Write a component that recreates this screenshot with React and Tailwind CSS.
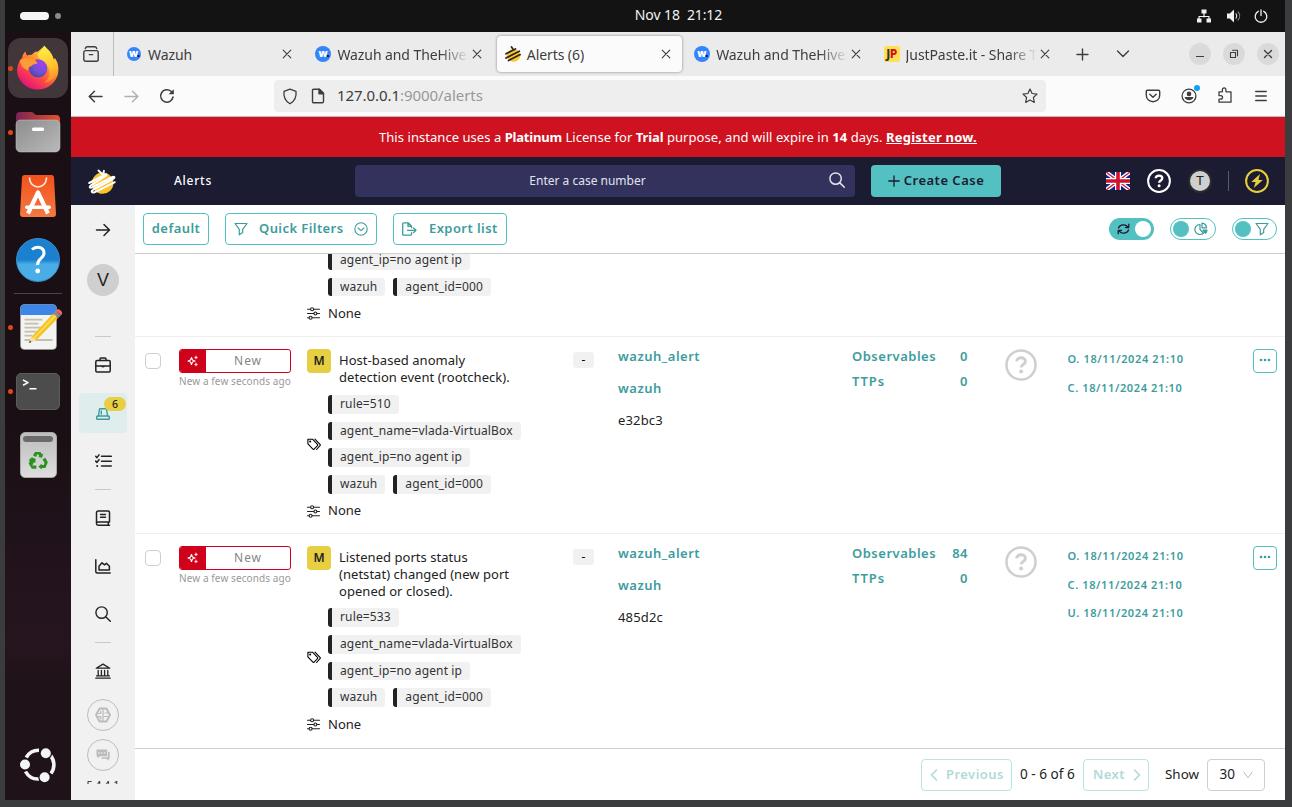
import React from "react";

/* ---------- small drawing helpers ---------- */

function Icon({ w = 16, h = w, vb, sw = 1.3, children, className = "" }) {
  return (
    <svg
      width={w}
      height={h}
      viewBox={vb || `0 0 ${w} ${h}`}
      fill="none"
      stroke="currentColor"
      strokeWidth={sw}
      strokeLinecap="round"
      strokeLinejoin="round"
      className={"shrink-0 " + className}
    >
      {children}
    </svg>
  );
}

const CloseX = ({ className = "" }) => (
  <Icon w={10} sw={1.1} className={className}>
    <path d="M1.2 1.2l7.6 7.6M8.8 1.2L1.2 8.8" />
  </Icon>
);

const WazuhFavicon = ({ small }) => (
  <span
    className={
      "flex shrink-0 items-center justify-center rounded-full bg-[#3585f9] font-['Open_Sans'] text-[10px] leading-none font-extrabold text-white " +
      (small ? "mr-px ml-px size-3.5" : "size-4")
    }
  >
    <span className="-mt-0.5 ml-px">w</span>
    <span className="-mt-0.5 -ml-px text-black">.</span>
  </span>
);

const HiveFavicon = () => (
  <Icon w={16} sw={1.7}>
    <ellipse cx="8.600" cy="9.400" rx="6.800" ry="6.300" fill="#fdc72f" stroke="none" />
    <path d="M6.500 1l1.300 1.800M1 7.800L10.500 3M1 12L14.300 5.200M3.500 14.600L15.200 8.600" stroke="#2b2420" />
  </Icon>
);

const HiveLogo = () => (
  <svg width="30" height="27" viewBox="0 0 30 27" fill="none" strokeLinecap="round" strokeLinejoin="round">
    <ellipse cx="15.600" cy="15.200" rx="10.800" ry="10.600" fill="#fbc22d" />
    <path
      d="M2.200 15L15.500 7.800C18.500 6 21 6.300 18.500 8L4 17.300C1.500 19.500 3 20.600 6 18.800L24 9.600C27.500 8 28.500 9.300 26 11L6.500 21.500C3 23.800 5 25.600 9.500 23.300L27.800 14.200"
      stroke="#fff"
      strokeWidth="2"
    />
    <path d="M11.500 2.500l4 4M17 2.800l-1 3.400" stroke="#fff" strokeWidth="1.900" />
  </svg>
);

const Question = ({ size, sw }) => (
  <Icon w={size} vb="0 0 24 24" sw={sw}>
    <circle cx="12" cy="12" r="10.900" />
    <path d="M8.700 9.300c.2-3.700 6.600-3.700 6.600 0 0 2.200-3.100 2.200-3.200 4.500" strokeWidth={sw * 1.15} strokeLinecap="butt" />
    <circle cx="12.100" cy="16.800" r="1.500" fill="currentColor" stroke="none" />
  </Icon>
);

const Funnel = ({ w = 14 }) => (
  <Icon w={w} vb="0 0 14 14" sw={1.2}>
    <path d="M1 1.500h12L8.700 7.300v3.200L5.300 12.800V7.300z" />
  </Icon>
);

const SearchIcon = ({ sw = 1.5 }) => (
  <Icon w={16} sw={sw}>
    <circle cx="6.600" cy="6.600" r="5.700" />
    <path d="M10.900 10.900L15.300 15.300" />
  </Icon>
);

/* ---------- desktop ---------- */

function TopBar() {
  return (
    <div className="flex h-8 items-center bg-[#131313] text-[#f2f2f2]">
      <div className="flex flex-1 items-center gap-1.5 pl-[15px]">
        <span className="h-2 w-[29px] rounded-full bg-[#f4f4f4]" />
        <span className="size-1.5 rounded-full bg-[#8a8a8a]" />
      </div>
      <div className="pb-[3px] pl-[69px] text-[14px] tracking-[-0.1px] whitespace-pre">Nov 18  21:12</div>
      <div className="flex flex-1 items-center justify-end gap-3 pr-[17px]">
        <Icon w={16} sw={1.2} className="mr-0.5">
          <path d="M8 5v4M3 11V8.500h10V11" />
          <path d="M5.500 1.500h5v4h-5zM1 10.500h4.500v4H1zM10.500 10.500H15v4h-4.500z" fill="currentColor" stroke="none" />
        </Icon>
        <Icon w={16} sw={1.1}>
          <path d="M1 5.500h2.800L8 1.500v13l-4.200-4H1z" fill="currentColor" stroke="none" />
          <path d="M10 5.800c1 1.400 1 3 0 4.400" />
          <path d="M12 3.800c2.200 2.400 2.200 6 0 8.400" stroke="#8a8a8a" />
        </Icon>
        <Icon w={14} sw={1.3}>
          <path d="M4.300 2.300a5.800 5.800 0 1 0 5.400 0M7 .8v5.800" />
        </Icon>
      </div>
    </div>
  );
}

const Firefox = () => (
  <svg width="44" height="46" viewBox="0 0 44 46" className="-mt-0.5 -ml-px">
    <defs>
      <linearGradient id="ffBody" x1=".85" y1=".1" x2=".25" y2=".95">
        <stop offset="0" stopColor="#ffe14a" />
        <stop offset=".35" stopColor="#ff9a2c" />
        <stop offset=".65" stopColor="#ff4a45" />
        <stop offset="1" stopColor="#e6127c" />
      </linearGradient>
      <radialGradient id="ffGlobe" cx=".7" cy=".25" r=".8">
        <stop offset="0" stopColor="#a33df2" />
        <stop offset=".55" stopColor="#7550d8" />
        <stop offset="1" stopColor="#4b48a8" />
      </radialGradient>
      <linearGradient id="ffTail" x1=".4" y1="0" x2=".6" y2="1">
        <stop offset="0" stopColor="#fff04a" />
        <stop offset=".6" stopColor="#ffc22e" />
        <stop offset="1" stopColor="#ff8a2a" />
      </linearGradient>
    </defs>
    <path
      d="M6 14c.4-3 2-5.500 3.500-6.500.2 2 .8 3.200 1.700 4 1.800-.8 3-.9 4.500-.7 2-2 3.300-3 4.800-3.300C20 10 26 3 29 2.500c.4 5 8 7 9 14 .6-.4.9-1.500.9-2.400C42.500 19 43 25 42 30a21 21 0 0 1-40.600 0C.6 24 2 18 6 14z"
      fill="url(#ffBody)"
    />
    <path
      d="M21.500 10c2-1.500 5.500-5.500 6.500-8.500 5 5 9 8 9.700 15 .5-.5.8-1.500.8-2.500 4 6.500 3.500 15-1 20-3 3.300-6 4.500-9 4.500 6-5 6.500-11 3-16.500C29.500 17.500 22 17 21.500 10z"
      fill="url(#ffTail)"
    />
    <circle cx="22" cy="24.500" r="9.300" fill="url(#ffGlobe)" />
    <path
      d="M4 16c4-2.500 7-2.500 10-1.500 2.500.9 4.500.8 6 2.500l1.500 2.500c-2.500.6-5 .6-6 2.500-1.800.4-3.500 1.500-3 4.500-4-1-8.500-4.500-8.500-10.500z"
      fill="#ff9a35"
    />
    <path d="M12.700 24c0 6 4 10 9.300 10s9-3.500 9.600-7" fill="none" stroke="#ff5a3a" strokeWidth=".8" opacity=".7" />
  </svg>
);

const Files = () => (
  <svg width="46" height="42" viewBox="0 0 46 42">
    <defs>
      <linearGradient id="fTab" x1="0" x2="1">
        <stop offset="0" stopColor="#7a2454" />
        <stop offset="1" stopColor="#e5512a" />
      </linearGradient>
      <linearGradient id="fBody" x1="0" y1="0" x2="1" y2="1">
        <stop offset="0" stopColor="#8d8d8d" />
        <stop offset="1" stopColor="#b9b9b9" />
      </linearGradient>
    </defs>
    <path d="M1 5a4 4 0 0 1 4-4h11.500c2 0 3 3 5 3H41a4 4 0 0 1 4 4v20H1z" fill="url(#fTab)" />
    <rect x="1" y="9" width="44" height="32" rx="4.500" fill="url(#fBody)" stroke="#c9c9c9" strokeWidth=".5" />
    <rect x="17" y="16.500" width="12" height="3.500" rx="1.500" fill="#fff" />
  </svg>
);

const Store = () => (
  <svg width="36" height="44" viewBox="0 0 36 44">
    <defs>
      <linearGradient id="sBag" x1="0" y1="0" x2="0" y2="1">
        <stop offset="0" stopColor="#f4511c" />
        <stop offset="1" stopColor="#f37a42" />
      </linearGradient>
    </defs>
    <path d="M2 3.500C2 2 3 1 4.500 1h27C33 1 34 2 34 3.500L36 40c0 2-1 3-3 3H3c-2 0-3-1-3-3z" fill="url(#sBag)" />
    <path d="M9.500 3.500c0 12.500 17 12.500 17 0" fill="none" stroke="#fde9de" strokeWidth="1.500" />
    <path d="M8 39.500L18 18.500l10 21" fill="none" stroke="#fff" strokeWidth="4.200" strokeLinejoin="round" />
    <rect x="5" y="31.500" width="26" height="3.600" rx="1.800" fill="#fff" />
  </svg>
);

const Help = () => (
  <span className="flex size-11 items-center justify-center rounded-full border border-[#3a8fd0] bg-linear-to-b from-[#1b80d0] from-50% to-[#49ade6] to-60%">
    <svg width="18" height="30" viewBox="0 0 18 30" fill="none">
      <path d="M3 4.500c4.500-4 12-2.500 12 3.500 0 5.500-6.500 5.500-6.500 12" stroke="#fff" strokeWidth="3" />
      <circle cx="8.700" cy="26" r="2.400" fill="#fff" />
    </svg>
  </span>
);

const Editor = () => (
  <svg width="44" height="46" viewBox="0 0 44 46">
    <rect x=".5" y=".5" width="36" height="45" rx="4" fill="#f3f3f1" stroke="#9b9b9b" strokeWidth=".6" />
    <path d="M.5 11V4.500a4 4 0 0 1 4-4h28a4 4 0 0 1 4 4V11z" fill="#3b86e6" />
    <path d="M4.500 15.700h18M4.500 19.700h14M4.500 23.700h18M4.500 27.700h12M4.500 31.700h8M4.500 36h28" stroke="#c3c0b2" strokeWidth="1.800" />
    <path d="M11.500 33L33 9.500l5 4.500L17 35.500l-8 3z" fill="#f8c21c" />
    <path d="M13 35L36 11" stroke="#ffe06a" strokeWidth="1.500" />
    <path d="M11.300 33l5.200 3L9 39z" fill="#f6dfae" />
    <path d="M10 36.700l1.600 1.200L8.600 39z" fill="#333" />
    <path d="M33 9.200l2.600-2.800 5.400 4.800-2.700 2.900z" fill="#8a8a8a" />
    <path d="M35.400 6.500c2-2 4.200-1.600 5.700.2 1.300 1.500 1.300 3.100.2 4.600z" fill="#f06464" />
  </svg>
);

const Terminal = () => (
  <span className="flex h-[37px] w-11 rounded-[5px] border border-[#5c5c5c] bg-[#4c4c4c] text-white">
    <Icon w={18} h={16} sw={1.6} className="mt-1 ml-1">
      <path d="M2 2l5 2.600L2 7.200M8.500 10.700h7" strokeLinecap="butt" />
    </Icon>
  </span>
);

const Trash = () => (
  <span className="flex h-[46px] w-[37px] flex-col items-center rounded-[5px] border border-[#a9a9a9] bg-linear-to-b from-[#bdbdbd] to-[#dedede] pt-[3px]">
    <span className="h-1.5 w-[30px] rounded-[3px] bg-[#6b6b6b]" />
    <svg width="20" height="18" viewBox="0 0 24 22" className="mt-[10px]" fill="#2a9222">
      <path d="M8.500 0h6.500l1.800 2.600 1.700-.9-1.500 5.200-5-.8 1.700-1L11.800 2 9.500 6 5.800 4z" />
      <path d="M4.500 6.500l4.600 2-.4 5-1.800-1L5 16.500h5v4H4.500L.5 14l1.600-3L.5 10z" />
      <path d="M17.500 9l3.500-2 3 5.500-3 7h-4.500v2L12.500 18l4-4v2H19l1-2.500z" />
    </svg>
  </span>
);

const UbuntuLogo = () => (
  <svg width="38" height="38" viewBox="0 0 38 38" fill="none" stroke="#f4f4f4">
    <path d="M7.200 11.500A14.500 14.500 0 0 1 20 4.300M31.500 9.500a14.500 14.500 0 0 1 .5 18M20 33A14.500 14.500 0 0 1 6.500 25.500" strokeWidth="3.600" />
    <circle cx="6" cy="18.500" r="6.300" fill="#1f1218" stroke="none" />
    <circle cx="26.800" cy="7.200" r="6.300" fill="#1f1218" stroke="none" />
    <circle cx="25.600" cy="31.200" r="6.300" fill="#1f1218" stroke="none" />
    <circle cx="6" cy="18.500" r="5" fill="#f4f4f4" stroke="none" />
    <circle cx="26.800" cy="7.200" r="5" fill="#f4f4f4" stroke="none" />
    <circle cx="25.600" cy="31.200" r="5" fill="#f4f4f4" stroke="none" />
  </svg>
);

function DockItem({ running, active, children, className = "" }) {
  return (
    <div className="flex h-16 items-center">
      <span className={"ml-[3px] size-[5px] shrink-0 rounded-full " + (running ? "relative z-10 bg-[#dd4814]" : "")} />
      <div
        className={
          "-ml-[5px] flex size-[60px] shrink-0 items-center justify-center rounded-[13px] " +
          (active ? "bg-[#413639] " : "") +
          className
        }
      >
        {children}
      </div>
    </div>
  );
}

function Dock() {
  return (
    <div className="flex w-[66px] shrink-0 flex-col bg-linear-to-b from-[#1a0f15] from-50% via-[#26151f] via-80% to-[#1f1218] to-85% pt-1">
      <DockItem running active><Firefox /></DockItem>
      <DockItem running><Files /></DockItem>
      <DockItem><Store /></DockItem>
      <DockItem><Help /></DockItem>
      <div className="mt-px mb-px ml-[9px] h-px w-12 bg-[#4b4347]" />
      <DockItem running className="pl-[7px]"><Editor /></DockItem>
      <DockItem running><Terminal /></DockItem>
      <DockItem><Trash /></DockItem>
      <div className="flex-1" />
      <div className="mb-4 pl-3.5"><UbuntuLogo /></div>
    </div>
  );
}

/* ---------- browser chrome ---------- */

const tabs = [
  { title: "Wazuh", icon: <WazuhFavicon small /> },
  { title: "Wazuh and TheHive:", icon: <WazuhFavicon />, fade: true },
  { title: "Alerts (6)", icon: <HiveFavicon />, active: true },
  { title: "Wazuh and TheHive:", icon: <WazuhFavicon />, fade: true },
  {
    title: "JustPaste.it - Share T",
    icon: (
      <span className="flex size-4 shrink-0 items-center justify-center rounded-[2px] bg-[#ffdf55] text-[12px] leading-none font-extrabold tracking-tighter">
        <span className="text-[#333]">J</span>
        <span className="text-[#d3120b]">P</span>
      </span>
    ),
    fade: true,
  },
];

function TabStrip() {
  return (
    <div className="flex h-11 items-center bg-[#ebebeb] text-[#3d3d3d]">
      <div className="flex h-full w-[43px] items-center justify-center border-r border-[#bdbdbd] pr-0.5">
        <Icon w={16} sw={1.4}>
          <rect x=".8" y="4.600" width="14.400" height="10.600" rx="1.800" />
          <path d="M2.300 2.500c.4-1.300 1-1.700 2-1.700h7.400c1 0 1.600.4 2 1.700M6.300 8.600h3.400" />
        </Icon>
      </div>
      <div className="ml-[2px] flex">
        {tabs.map((t, i) => (
          <div key={i} className="w-[189.400px] px-0.5">
            <div
              className={
                "flex h-9 items-center rounded-[4px] pr-[11px] pl-2 " +
                (t.active ? "bg-[#fbfbfb] shadow-[0_0_3px_rgba(0,0,0,0.45)]" : "")
              }
            >
              {t.icon}
              <span
                className={
                  "ml-[6px] min-w-0 flex-1 text-[14px] tracking-[-0.08px] whitespace-nowrap " +
                  (t.fade ? "overflow-hidden mask-r-from-78% mask-r-to-100%" : "")
                }
              >
                {t.title}
              </span>
              <CloseX className="ml-[3px]" />
            </div>
          </div>
        ))}
      </div>
      <div className="flex w-[45px] justify-center pr-[5px]">
        <Icon w={13} sw={1.4}><path d="M6.500 1v11M1 6.500h11" /></Icon>
      </div>
      <Icon w={14} h={8} sw={1.4} className="ml-2"><path d="M1.500 1l5.500 5.500L12.500 1" /></Icon>
      <div className="flex-1" />
      <div className="flex gap-3 pr-1.5">
        <span className="flex size-[22px] items-center justify-center rounded-full bg-[#dadada]">
          <Icon w={10} sw={1.2}><path d="M1.500 7.500h7" /></Icon>
        </span>
        <span className="flex size-[22px] items-center justify-center rounded-full bg-[#dadada]">
          <Icon w={10} sw={1.1}><path d="M1.500 3.500h5v5h-5zM3.500 1.300h5v5.400" /></Icon>
        </span>
        <span className="flex size-[22px] items-center justify-center rounded-full bg-[#dadada]">
          <Icon w={10} sw={1.4}><path d="M1.500 1.500l7 7M8.500 1.500l-7 7" /></Icon>
        </span>
      </div>
    </div>
  );
}

function Slot({ children, className = "" }) {
  return <div className={"flex w-9 items-center justify-center " + className}>{children}</div>;
}

function UrlBar() {
  return (
    <div className="flex h-10 items-center bg-[#fbfbfb] pr-1.5 pl-1.5 text-[#3d3d3d]">
      <Slot><Icon w={15} h={13} sw={1.5}><path d="M14 6.500H1.200M6.500 1.200L1.200 6.500l5.300 5.300" /></Icon></Slot>
      <Slot className="text-[#b0b0b0]"><Icon w={15} h={13} sw={1.5}><path d="M1 6.500h12.800M8.500 1.200l5.300 5.300-5.300 5.300" /></Icon></Slot>
      <Slot>
        <Icon w={16} sw={1.5}>
          <path d="M14 9A6.200 6.200 0 1 1 12 3.300l1.600 1.500" />
          <path d="M14.800 1.200v5H9.600z" fill="currentColor" stroke="none" />
        </Icon>
      </Slot>
      <div className="ml-[89px] flex h-8 w-[772px] items-center rounded-[4px] bg-[#eeeeee] pr-2 pl-2">
        <Icon w={16} h={17} sw={1.3}>
          <path d="M8 1.200l6 2.200c.6 5-.6 9.400-6 12.400C2.600 12.800 1.400 8.400 2 3.400z" />
        </Icon>
        <Icon w={14} h={16} sw={1.4} className="ml-[13px]">
          <path d="M1.500 2.500c0-.8.400-1.200 1.200-1.200H8.500l4 4v8.200c0 .8-.4 1.200-1.200 1.200H2.700c-.8 0-1.200-.4-1.200-1.200z" />
          <path d="M8 1.300v4.400h4.500z" fill="currentColor" />
        </Icon>
        <span className="-mt-px ml-3 text-[15px] tracking-[-0.06px]">
          127.0.0.1<span className="text-[#989898]">:9000/alerts</span>
        </span>
        <div className="flex-1" />
        <Icon w={16} sw={1.2}>
          <path d="M8 1l2.100 4.500 4.900.6-3.600 3.400.9 4.900L8 12l-4.300 2.400.9-4.900L1 6.100l4.900-.6z" />
        </Icon>
      </div>
      <div className="flex-1" />
      <Slot>
        <Icon w={16} h={14} sw={1.4}>
          <path d="M2.500 1.200h11c.8 0 1.200.4 1.200 1.200v3.800c0 8.700-13.400 8.700-13.400 0V2.400c0-.8.400-1.200 1.200-1.200z" />
          <path d="M4.800 5.200L8 8.200l3.200-3" />
        </Icon>
      </Slot>
      <Slot className="relative">
        <Icon w={16} sw={1.3}>
          <circle cx="8" cy="8" r="6.900" />
          <circle cx="8" cy="5.900" r="2.300" fill="currentColor" stroke="none" />
          <path d="M3.600 9h8.800c-.6 4.200-8.200 4.200-8.800 0z" fill="currentColor" stroke="none" />
        </Icon>
        <span className="absolute -top-[3px] right-[7px] size-1.5 rounded-full bg-[#0aa4f5]" />
      </Slot>
      <Slot>
        <Icon w={16} h={18} sw={1.300} className="-mt-0.5">
          <path d="M2 5.800h2.900c.6 0 .7-.5.500-1C4.600 1 9.700 1 8.900 4.800c-.2.500 0 1 .5 1h4.600v10.400H2v-3h1.600c2.600 0 2.600-3.600 0-3.600H2z" />
        </Icon>
      </Slot>
      <Slot><Icon w={12} h={12} sw={1.3}><path d="M.7 1.500h10.600M.7 6h10.600M.7 10.500h10.600" /></Icon></Slot>
    </div>
  );
}

/* ---------- TheHive header ---------- */

const Flag = () => (
  <svg width="24" height="18" viewBox="0 0 24 18">
    <rect width="24" height="18" fill="#012a8a" />
    <path d="M0 0l24 18M24 0L0 18" stroke="#fff" strokeWidth="4" />
    <path d="M0 0l24 18M24 0L0 18" stroke="#d0122e" strokeWidth="1.300" />
    <path d="M12 0v18M0 9h24" stroke="#fff" strokeWidth="6" />
    <path d="M12 0v18M0 9h24" stroke="#d0122e" strokeWidth="3.600" />
  </svg>
);

function Header() {
  return (
    <>
      <div className="flex h-10 items-center justify-center bg-[#ce1220] pt-px text-[13px] tracking-[0.05px] whitespace-pre text-white">
        This instance uses a <b className="tracking-[-0.2px]">Platinum</b> License for <b className="tracking-[-0.1px]">Trial</b> purpose, and will expire in <b>14</b> days.{" "}
        <b className="tracking-[0.22px] underline">Register now.</b>
      </div>
      <div className="flex h-12 items-center bg-[#1b1b31] pr-4 pl-4 text-white">
        <HiveLogo />
        <span className="ml-[57px] w-[181px] text-[12px] font-medium tracking-[0.75px]">Alerts</span>
        <div className="flex h-8 w-[500px] items-center rounded-[4px] bg-[#32325d] pr-[10px] text-[#e3e3ee]">
          <span className="flex-1 pr-[19px] text-center text-[12px]">Enter a case number</span>
          <span className="-ml-[10px] -mt-0.5"><SearchIcon /></span>
        </div>
        <div className="ml-4 flex h-8 w-[130px] items-center justify-center gap-1 rounded-[4px] bg-[#53c1c1] text-[13px] font-semibold tracking-[0.5px] text-[#1b1b31]">
          <Icon w={12} sw={1.3}><path d="M6 .8v10.400M.8 6h10.400" /></Icon>
          Create Case
        </div>
        <div className="flex-1" />
        <Flag />
        <span className="ml-[17px]"><Question size={24} sw={2} /></span>
        <span className="ml-[17px] flex size-6 items-center justify-center rounded-full border-2 border-[#2b2b2b] bg-[#cfcfcf] font-['Liberation_Sans'] text-[13px] text-[#222]">
          T
        </span>
        <span className="mx-4 h-5 w-px bg-[#5b5b6e]" />
        <span className="text-[#e8cd3d]">
          <Icon w={24} sw={2}>
            <circle cx="12" cy="12" r="10.900" />
            <path d="M15 5L6.300 13h4.300L8.800 19l9-8h-4.400z" fill="currentColor" stroke="none" />
          </Icon>
        </span>
      </div>
    </>
  );
}

/* ---------- side navigation ---------- */

const SideSep = () => <div className="h-px w-4 bg-[#c9c9c9]" />;
const SideItem = ({ children }) => <div className="flex h-12 items-center justify-center">{children}</div>;

function SideNav() {
  return (
    <div className="flex w-16 shrink-0 flex-col items-center bg-[#f1f1f1] pt-px text-[#222]">
      <SideItem>
        <Icon w={16} h={14} sw={1.5}><path d="M1.500 7h13M9 1.500L14.500 7 9 12.500" /></Icon>
      </SideItem>
      <div className="mt-2.5 flex size-8 items-center justify-center rounded-full bg-[#cfcfcf] font-['Liberation_Sans'] text-[18px]">
        V
      </div>
      <div className="mt-10 mb-1"><SideSep /></div>
      <SideItem>
        <Icon w={16} sw={1.5}>
          <rect x=".8" y="3.600" width="14.400" height="11.400" rx="1.200" />
          <path d="M5 3.500V2c0-.6.400-1 1-1h4c.6 0 1 .4 1 1v1.500M.8 9h4.700M10.500 9h4.700" />
          <path d="M5.600 8.300h4.800c0 3-4.800 3-4.800 0z" fill="currentColor" stroke="none" />
        </Icon>
      </SideItem>
      <div className="relative mt-1 flex h-10 w-12 items-center justify-center rounded-[4px] bg-[#e0eded] text-[#3d9c9c]">
        <Icon w={14} h={12} sw={1.400} className="mt-0.5">
          <rect x=".7" y="8" width="12.600" height="3.300" rx=".8" />
          <path d="M2.500 7.800L3.400 1.500c.1-.5.300-.8.900-.8h5.400c.6 0 .8.300.9.800l.9 6.300M5.300 3v3" />
        </Icon>
        <span className="absolute top-1 right-px flex h-3.5 w-[22px] items-center justify-center rounded-full bg-[#e8cf42] text-[10.500px] leading-none font-medium text-[#222]">
          6
        </span>
      </div>
      <div className="mt-1"><SideItem>
        <Icon w={17} h={14} sw={1.500}>
          <path d="M6.500 2.300h9.800M6.500 7.200h9.800M6.500 12h9.800" />
          <path d="M.7 2.300l1.300 1.300L4 .9M.7 7.100l1.300 1.300 2-2.700" />
          <circle cx="2.200" cy="12" r="1" fill="currentColor" stroke="none" />
        </Icon>
      </SideItem></div>
      <div className="mt-1 mb-1"><SideSep /></div>
      <SideItem>
        <Icon w={16} sw={1.500}>
          <path d="M14.500 12H3.200C.8 12 .8 15.200 3.200 15.200h11.300M1.500 13.200V2.800c0-1.200.6-1.800 1.800-1.800h9.900c.8 0 1.300.5 1.300 1.300V12M13.300 12v3M5.500 4.400h5M5.500 7.200h5" />
        </Icon>
      </SideItem>
      <SideItem>
        <Icon w={16} h={15} sw={1.500}>
          <path d="M.8 .8v11.700c0 1 .4 1.500 1.400 1.500h13" />
          <path d="M4 11V7.200L7 3.800l2.600 2L11.400 4.300l3 3V11z" />
        </Icon>
      </SideItem>
      <SideItem><SearchIcon sw={1.400} /></SideItem>
      <div className="mt-1 mb-1"><SideSep /></div>
      <SideItem>
        <Icon w={16} sw={1.300}>
          <path d="M1.200 5.200L8 1.100l6.800 4.100zM.8 15.200h14.400M1.600 12.900h12.800M3.200 7.500v4.600M6.400 7.500v4.600M9.600 7.500v4.600M12.800 7.500v4.600" />
        </Icon>
      </SideItem>
      <div className="mt-1 flex size-8 items-center justify-center rounded-full border border-[#bdbdbd] text-[#bbb]">
        <Icon w={16} sw={1.900}>
          <path d="M4.600 1.500h6.800L15 8l-3.600 6.500H4.600L1 8z" />
          <path d="M8 2v12M3.500 6.500h2.200V4.300M3.200 9.700h2.600v2.200M12.600 6H10M12.800 9.500H8" strokeWidth="1.200" />
        </Icon>
      </div>
      <div className="mt-2 flex size-8 items-center justify-center rounded-full border border-[#bdbdbd] text-[#bbb]">
        <Icon w={14} h={12}>
          <path d="M1.500.5h8.700c.7 0 1 .3 1 1v4.800c0 .7-.3 1-1 1H4L1.500 9.500V7.300c-.7 0-1-.3-1-1V1.500c0-.7.300-1 1-1z" fill="currentColor" stroke="none" />
          <path d="M12 2.800h.7c.7 0 1 .3 1 1v5c0 .6-.3 1-1 1v1.700L10.300 9.800H5.500v-1.600H11c.6 0 1-.4 1-1z" fill="currentColor" stroke="none" />
          <path d="M3 4h.2M5.700 4h.2M8.400 4h.2" stroke="#f1f1f1" />
        </Icon>
      </div>
      <div className="mt-2 h-[5px] overflow-hidden font-['Liberation_Sans'] text-[10.500px] leading-[12px]">5.4.4-1</div>
    </div>
  );
}

/* ---------- toolbar ---------- */

const btn =
  "flex h-8 items-center rounded-[4px] border border-[#53c1c1] text-[13px] font-semibold tracking-[0.42px] text-[#3d9c9c]";

function Toolbar() {
  return (
    <div className="flex h-[49px] shrink-0 items-center border-b border-[#cfcfcf] px-2 text-[#3d9c9c]">
      <div className={btn + " w-[66px] justify-center"}>default</div>
      <div className={btn + " ml-4 w-[152px] pl-2"}>
        <Funnel />
        <span className="ml-[11px] w-[95px]">Quick Filters</span>
        <Icon w={14} h={14} sw={1.100}>
          <circle cx="7" cy="7" r="6.200" />
          <path d="M4 6l3 2.700L10 6" />
        </Icon>
      </div>
      <div className={btn + " ml-4 w-[114px] pl-2"}>
        <Icon w={15} h={14} sw={1.300}>
          <path d="M9.600 10.700v1.600c0 .6-.3.900-.9.900H1.600c-.6 0-.9-.3-.9-.9V1.700c0-.6.300-.9.900-.9h4.600l3.400 3.400v1.600M6 .8v3.600h3.600M5.500 8.300h8.300M11.600 6l2.400 2.300-2.400 2.300" />
        </Icon>
        <span className="ml-3">Export list</span>
      </div>
      <div className="flex-1" />
      <div className="flex h-[22px] w-[45px] items-center justify-between rounded-full bg-[#53c1c1] pr-[3px] pl-2 text-[#1b1b31]">
        <Icon w={13} h={12} sw={1.300}>
          <path d="M1.500 5C2.500 1.800 8 .6 10.700 3.600M11.500 7c-1 3.200-6.500 4.400-9.200 1.400" />
          <path d="M11.800 1.200v3.300H8.500M1.200 10.800V7.500h3.300" />
        </Icon>
        <span className="size-4 rounded-full bg-white" />
      </div>
      <div className="ml-4 flex h-[22px] w-[46px] items-center justify-between rounded-full border border-[#53c1c1] pr-[7px] pl-0.5">
        <span className="size-4 rounded-full bg-[#53c1c1]" />
        <Icon w={14} sw={1.200}>
          <path d="M6 2.500A5 5 0 1 0 9.500 11L6 7.500z" />
          <path d="M8 5.800V1.200c2.500.2 4.300 2 4.500 4.600z" />
          <path d="M9 8.200h4c-.2 1.500-.8 2.600-1.500 3.200z" fill="currentColor" />
        </Icon>
      </div>
      <div className="ml-4 flex h-[22px] w-[45px] items-center justify-between rounded-full border border-[#53c1c1] pr-[7px] pl-0.5">
        <span className="size-4 rounded-full bg-[#53c1c1]" />
        <Funnel />
      </div>
    </div>
  );
}

/* ---------- alert list ---------- */

function Tag({ children }) {
  return (
    <span className="h-[18.670px] rounded-[3px] border-l-4 border-[#222] bg-[#f1f1f1] pr-2 pl-2 text-[12px] leading-[18px] tracking-[0.14px] text-[#333]">
      {children}
    </span>
  );
}

function Tags({ rows, icon = true }) {
  return (
    <div className="flex items-center gap-2">
      <span className="w-[13px]">
        {icon && (
          <Icon w={14} h={13} sw={1.100}>
            <path d="M.9 1.200h4.600l5 5.200c.4.400.4.800 0 1.200l-3.400 3.500c-.4.400-.8.400-1.200 0L.9 5.900z" />
            <path d="M8 1.200l5 5.100c.5.500.5.900 0 1.400L9.600 11.500" />
            <circle cx="3.200" cy="3.500" r=".5" />
          </Icon>
        )}
      </span>
      <div className="flex flex-col gap-2">
        {rows.map((r, i) => (
          <div key={i} className="flex gap-2">
            {r.map((t) => <Tag key={t}>{t}</Tag>)}
          </div>
        ))}
      </div>
    </div>
  );
}

function CustomFields() {
  return (
    <div className="flex h-[35px] items-center gap-2 text-[13px] text-[#222]">
      <Icon w={13} h={13} sw={1.100}>
        <path d="M.5 2.200h3M6.700 2.200h5.800M.5 6.500h6.300M10 6.500h2.500M.5 10.800h1.500M5.200 10.800h7.300" />
        <circle cx="5.100" cy="2.200" r="1.500" />
        <circle cx="8.400" cy="6.500" r="1.500" />
        <circle cx="3.600" cy="10.800" r="1.500" />
      </Icon>
      None
    </div>
  );
}

const link = "text-[13px] font-semibold tracking-[0.5px] text-[#3d9c9c]";

function AlertRow({ title, rule, id, observables, dates, last }) {
  return (
    <div className={"flex shrink-0 items-start pt-3 pl-[10px] " + (last ? "" : "h-[197px] border-b border-[#efefef]")}>
      <span className="mt-1 size-4 rounded-[4px] border border-[#cfcfcf]" />
      <div className="ml-[18px] w-28">
        <div className="flex h-6 overflow-hidden rounded-[3px] border border-[#d0021b]">
          <span className="flex w-[26px] items-center justify-center bg-[#d0021b] text-white">
            <Icon w={12} h={12} sw={1.100}>
              <path d="M4.500 2.500l1 2.500L8 6l-2.500 1-1 2.500-1-2.500L1 6l2.500-1z" />
              <path d="M9 .8l.5 1.200 1.200.5-1.200.5L9 4.200 8.500 3l-1.200-.5L8.500 2zM9 7.800l.5 1.200 1.200.5-1.200.5L9 11.200 8.500 10l-1.200-.5L8.500 9z" fill="currentColor" strokeWidth=".3" />
            </Icon>
          </span>
          <span className="flex-1 text-center text-[12px] leading-[22px] tracking-[0.9px] text-[#858585]">New</span>
        </div>
        <div className="text-[10px] leading-[16px] tracking-[0.1px] whitespace-nowrap text-[#999]">New a few seconds ago</div>
      </div>
      <div className="ml-4 w-[266px]">
        <div className="flex gap-2">
          <span className="flex size-6 items-center justify-center rounded-[4px] bg-[#e8cf42] text-[12px] font-semibold text-[#222]">M</span>
          <div className="pt-[3px] text-[13px] leading-[17px] tracking-[0.04px] text-[#222]">
            {title.map((l) => <div key={l}>{l}</div>)}
          </div>
        </div>
        <div className={last ? "mt-2" : "mt-[8.500px]"}>
          <Tags rows={[[`rule=${rule}`], ["agent_name=vlada-VirtualBox"], ["agent_ip=no agent ip"], ["wazuh", "agent_id=000"]]} />
        </div>
        <CustomFields />
        {last && <div className="h-[6px]" />}
      </div>
      <span className="mt-[3px] h-4 w-[21px] rounded-[3px] bg-[#f1f1f1] text-center text-[12px] leading-[15px]">-</span>
      <div className="-mt-px ml-6 w-[234px]">
        <div className={link + " leading-4"}>wazuh_alert</div>
        <div className={link + " mt-[15.500px] leading-4"}>wazuh</div>
        <div className="mt-[16.500px] text-[13px] leading-[17px] tracking-[0.15px] text-[#222]">{id}</div>
      </div>
      <div className={link + " -mt-px flex w-[116px] flex-col gap-[9px] leading-4"}>
        <div className="flex justify-between"><span>Observables</span><span>{observables}</span></div>
        <div className="flex justify-between"><span className="tracking-[0.9px]">TTPs</span><span>0</span></div>
      </div>
      <span className="ml-[37px] text-[#cfcfcf]"><Question size={32} sw={1.900} /></span>
      <div className="mt-[2px] ml-[30.500px] flex w-[185.500px] flex-col gap-[12.500px] text-[11px] leading-4 font-semibold tracking-[0.62px] text-[#3d9c9c]">
        {dates.map((d) => <span key={d}>{d}. 18/11/2024 21:10</span>)}
      </div>
      <span className="flex size-6 items-center justify-center rounded-[4px] border border-[#53c1c1] pb-0.5 text-[#3d9c9c]">
        <svg width="12" height="4" viewBox="0 0 12 4" fill="currentColor">
          <circle cx="2" cy="2" r="1.300" /><circle cx="6" cy="2" r="1.300" /><circle cx="10" cy="2" r="1.300" />
        </svg>
      </span>
    </div>
  );
}

function AlertList() {
  return (
    <div className="flex h-[494px] shrink-0 flex-col justify-end overflow-hidden bg-white">
      <div className="shrink-0 border-b border-[#efefef] pb-[5px] pl-[172px]">
        <Tags icon={false} rows={[["agent_ip=no agent ip"], ["wazuh", "agent_id=000"]]} />
        <CustomFields />
      </div>
      <AlertRow title={["Host-based anomaly", "detection event (rootcheck)."]} rule="510" id="e32bc3" observables="0" dates={["O", "C"]} />
      <AlertRow last title={["Listened ports status", "(netstat) changed (new port", "opened or closed)."]} rule="533" id="485d2c" observables="84" dates={["O", "C", "U"]} />
    </div>
  );
}

function Pagination() {
  return (
    <div className="flex flex-1 items-center justify-end border-t border-[#cfcfcf] pr-5 text-[14px] text-[#222]">
      <div className="flex h-8 w-[91px] items-center gap-2 rounded-[4px] border border-[#b9e4e4] pl-2 text-[13px] font-semibold tracking-[0.45px] text-[#b2d9d9]">
        <Icon w={8} h={12} sw={1.600}><path d="M6.500 1L1.500 6l5 5" /></Icon>
        Previous
      </div>
      <span className="mx-2 w-[55px] text-[13.600px] whitespace-nowrap">0 - 6 of 6</span>
      <div className="flex h-8 w-[66px] items-center gap-2 rounded-[4px] border border-[#b9e4e4] pl-[9px] text-[13px] font-semibold tracking-[0.45px] text-[#b2d9d9]">
        Next
        <Icon w={8} h={12} sw={1.600}><path d="M1.500 1l5 5-5 5" /></Icon>
      </div>
      <span className="ml-4 w-[42px] text-[13.400px]">Show</span>
      <div className="flex h-8 w-[58px] items-center gap-2 rounded-[4px] border border-[#cfcfcf] pl-[11.500px] text-[13.500px]">
        30
        <Icon w={10} h={8} sw={1} className="text-[#bbb]"><path d="M.8 1L5 6.800 9.200 1" /></Icon>
      </div>
    </div>
  );
}

export default function App() {
  return (
    <div className="flex h-[807px] w-[1292px] flex-col overflow-hidden bg-[#3b3c3e] pr-[7px] pb-[7px] pl-[5px] font-['Noto_Sans',sans-serif]">
      <TopBar />
      <div className="flex min-h-0 flex-1">
        <Dock />
        <div className="flex min-w-0 flex-1 flex-col">
          <TabStrip />
          <UrlBar />
          <div className="h-px shrink-0 bg-[#bcbcbc]" />
          <Header />
          <div className="flex min-h-0 flex-1">
            <SideNav />
            <div className="flex min-w-0 flex-1 flex-col bg-white">
              <Toolbar />
              <AlertList />
              <Pagination />
            </div>
          </div>
        </div>
      </div>
    </div>
  );
}
